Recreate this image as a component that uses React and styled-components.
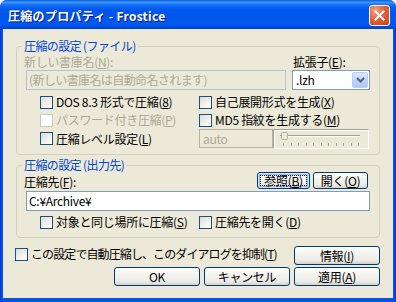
import React from "react";
import styled, { createGlobalStyle } from "styled-components";

const Global = createGlobalStyle`
  html, body { margin: 0; padding: 0; width: 396px; height: 302px; overflow: hidden; background: #fff; }
  body { font-family: "Noto Sans CJK JP", "Liberation Sans", sans-serif; font-size: 12px; line-height: 14px; color: #000; letter-spacing: -0.3px; }
  * { box-sizing: border-box; }
`;

const Window = styled.div`
  width: 396px; height: 302px; display: flex; flex-direction: column;
  background: linear-gradient(to right, #0831D9 0, #0A4FE6 2px, #0855DD 3px, #0855DD 393px, #0A4FE6 394px, #0831D9 396px);
  border-radius: 7px 7px 0 0; overflow: hidden;
`;

const TitleBar = styled.div`
  height: 29px; flex: none; display: flex; align-items: center; justify-content: space-between;
  padding: 2px 6px 0 8px;
  background: linear-gradient(to bottom, #0A5FD8 0%, #3D95FF 8%, #1671F4 16%, #0058EE 32%, #0055EB 60%, #005BF3 82%, #0050E0 92%, #003DD7 100%);
`;

const TitleText = styled.span`
  color: #fff; font-weight: bold; font-size: 12px; letter-spacing: 0.3px;
  text-shadow: 1px 1px 0 #0A1883;
`;

const CloseBtn = styled.div`
  width: 21px; height: 21px; border: 1px solid #fff; border-radius: 3px;
  background: radial-gradient(circle at 30% 25%, #F3A58A 0%, #E0623A 45%, #C8421C 100%);
  display: flex; align-items: center; justify-content: center; margin-top: -1px;
`;

const Client = styled.div`
  flex: 1; margin: 0 3px 4px 3px; background: #ECE9D8;
  padding: 10px 13px 0 13px; display: flex; flex-direction: column;
`;

const Group = styled.fieldset`
  margin: ${(p) => p.$mt || 0}px 0 0 0; padding: 0 9px 6px 7px;
  border: 1px solid #D0D0BF; border-radius: 4px; min-width: 0;
`;

const Legend = styled.legend`
  padding: 0 2px; margin-left: -2px; color: #0046D5; line-height: 14px; height: 14px;
  letter-spacing: -0.6px;
`;

const LabelRow = styled.div`
  display: flex; height: 14px; margin-top: 2px; white-space: nowrap;
`;

const Label = styled.span`
  width: ${(p) => (p.$w ? p.$w + "px" : "auto")};
  padding-left: ${(p) => p.$pl || 0}px;
  color: ${(p) => (p.$disabled ? "#ACA899" : "#000")};
  flex: ${(p) => (p.$grow ? 1 : "none")};
  align-self: ${(p) => p.$align || "auto"};
  white-space: nowrap;
`;

const InputRow = styled.div`
  display: flex; margin-top: 1px;
`;

const TextBox = styled.div`
  height: 20px; width: ${(p) => p.$w}px; margin-left: ${(p) => p.$ml || 0}px;
  border: 1px solid ${(p) => (p.$disabled ? "#B7C2CF" : "#7F9DB9")};
  background: ${(p) => (p.$disabled ? "#ECE9D8" : "#fff")};
  color: ${(p) => (p.$disabled ? "#ACA899" : "#000")};
  letter-spacing: ${(p) => (p.$tight ? "-0.6px" : "-0.3px")};
  padding: 2px 0 0 2px; white-space: nowrap; overflow: hidden; flex: none;
`;

const Combo = styled.div`
  height: 20px; width: ${(p) => p.$w}px; margin-left: ${(p) => p.$ml || 0}px;
  border: 1px solid #7F9DB9; background: #fff; display: flex; align-items: center;
  padding: 1px; flex: none;
`;

const ComboText = styled.span`
  flex: 1; padding-left: 2px;
`;

const DropBtn = styled.div`
  width: 16px; height: 16px; border: 1px solid #B9CEF7; border-radius: 2px;
  background: linear-gradient(to bottom, #DCE7FD 0%, #C3D4FB 50%, #B3C7F5 100%);
  display: flex; align-items: center; justify-content: center;
`;

const CheckGrid = styled.div`
  display: grid; grid-template-columns: 175px 1fr;
  grid-template-rows: ${(p) => p.$rows};
  margin-top: ${(p) => p.$mt}px;
`;

const Cell = styled.div`
  display: flex; align-items: center; padding-left: ${(p) => p.$pl || 0}px; min-width: 0;
`;

const CheckItem = styled.label`
  display: flex; align-items: center; gap: 3px; white-space: nowrap;
  color: ${(p) => (p.$disabled ? "#ACA899" : "#000")};
  margin: ${(p) => p.$m || 0};
  letter-spacing: ${(p) => p.$ls || "-0.3px"};
  height: 14px;
`;

const Box = styled.span`
  display: inline-block; width: 13px; height: 13px; flex: none;
  border: 1px solid ${(p) => (p.$disabled ? "#CAC8BB" : "#1C5180")};
  background: ${(p) =>
    p.$disabled ? "#fff" : "linear-gradient(135deg, #DCDCD7 0%, #F2F2EE 60%, #FFFFFF 100%)"};
`;

const AutoBox = styled.div`
  width: 74px; height: 19px; border: 1px solid #B5B3A6; color: #ACA899;
  padding: 2px 0 0 3px; background: #ECE9D8; flex: none;
`;

const SliderFrame = styled.div`
  width: 96px; height: 20px; flex: none;
  border-top: 1px solid #A4A193; border-left: 1px solid #A4A193;
  border-right: 1px solid #fff; border-bottom: 1px solid #fff;
  box-shadow: inset 1px 1px 0 #fff;
`;

const TopRow = styled.div`
  display: flex; height: 17px; align-items: stretch;
`;

const Btn = styled.div`
  position: relative;
  width: ${(p) => p.$w}px; height: ${(p) => p.$h}px; flex: none;
  margin-left: ${(p) => p.$ml || 0}px;
  border: 1px solid #003C74; border-radius: 3px;
  background: linear-gradient(to bottom, #FFFFFF 0%, #F4F3EE 40%, #ECEBE6 80%, #D6D0C5 100%);
  display: flex; align-items: center; justify-content: center; white-space: nowrap;
  box-shadow: ${(p) => (p.$focus ? "inset 0 0 0 1px #CEE7FF, inset 0 0 0 2px #98B8EA" : "none")};
  &::after {
    content: "";
    display: ${(p) => (p.$focus ? "block" : "none")};
    position: absolute; inset: 2px; border: 1px dotted #000;
  }
`;

const PathRow = styled.div`
  display: flex; margin-top: 2px;
`;

const BottomRow = styled.div`
  display: flex; justify-content: ${(p) => p.$justify}; align-items: flex-start;
  margin-top: ${(p) => p.$mt}px; gap: ${(p) => p.$gap || 0}px;
`;

const U = styled.span`
  text-decoration: underline; text-underline-offset: 1px;
`;

function Check({ children, disabled, m, ls }) {
  return (
    <CheckItem $disabled={disabled} $m={m} $ls={ls}>
      <Box $disabled={disabled} />
      <span>{children}</span>
    </CheckItem>
  );
}

function Slider() {
  const ticks = Array.from({ length: 11 }, (_, i) => 9 + i * 7.5);
  return (
    <SliderFrame>
      <svg width="94" height="18" viewBox="0 0 94 18">
        <rect x="6" y="5" width="80" height="1" fill="#A4A193" />
        <rect x="6" y="6" width="80" height="1" fill="#fff" />
        <rect x="7.5" y="2.5" width="6" height="7" rx="1" fill="#ECE9D8" stroke="#B3B1A4" />
        {ticks.map((x, i) => (
          <rect key={i} x={Math.round(x)} y="13" width="1" height="3" fill="#A4A193" />
        ))}
      </svg>
    </SliderFrame>
  );
}

export default function App() {
  return (
    <>
      <Global />
      <Window>
        <TitleBar>
          <TitleText>圧縮のプロパティ - Frostice</TitleText>
          <CloseBtn>
            <svg width="11" height="11" viewBox="0 0 11 11">
              <path d="M1.5 1.5 L9.5 9.5 M9.5 1.5 L1.5 9.5" stroke="#fff" strokeWidth="2" strokeLinecap="square" />
            </svg>
          </CloseBtn>
        </TitleBar>
        <Client>
          <Group>
            <Legend>圧縮の設定 (ファイル)</Legend>
            <LabelRow>
              <Label $w={268} $disabled>新しい書庫名(<U>N</U>):</Label>
              <Label $pl={1}>拡張子(<U>E</U>):</Label>
            </LabelRow>
            <InputRow>
              <TextBox $w={260} $ml={2} $disabled $tight>(新しい書庫名は自動命名されます)</TextBox>
              <Combo $w={78} $ml={6}>
                <ComboText>.lzh</ComboText>
                <DropBtn>
                  <svg width="9" height="6" viewBox="0 0 9 6">
                    <path d="M1 1 L4.5 4.5 L8 1" stroke="#4D6185" strokeWidth="2" fill="none" />
                  </svg>
                </DropBtn>
              </Combo>
            </InputRow>
            <CheckGrid $rows="18px 18px 19px" $mt={3}>
              <Cell $pl={16}><Check>DOS 8.3 形式で圧縮(<U>8</U>)</Check></Cell>
              <Cell><Check>自己展開形式を生成(<U>X</U>)</Check></Cell>
              <Cell $pl={16}><Check disabled>パスワード付き圧縮(<U>P</U>)</Check></Cell>
              <Cell><Check>MD5 指紋を生成する(<U>M</U>)</Check></Cell>
              <Cell $pl={16}><Check>圧縮レベル設定(<U>L</U>)</Check></Cell>
              <Cell>
                <AutoBox>auto</AutoBox>
                <Slider />
              </Cell>
            </CheckGrid>
          </Group>
          <Group $mt={3}>
            <Legend>圧縮の設定 (出力先)</Legend>
            <TopRow>
              <Label $grow $align="flex-end">圧縮先(<U>F</U>):</Label>
              <Btn $w={53} $h={17} $focus>参照(<U>B</U>)</Btn>
              <Btn $w={55} $h={17} $ml={3}>開く(<U>O</U>)</Btn>
              <Label $w={2} />
            </TopRow>
            <PathRow>
              <TextBox $w={344} $ml={2}>C:¥Archive¥</TextBox>
            </PathRow>
            <CheckGrid $rows="18px" $mt={2}>
              <Cell $pl={16}><Check>対象と同じ場所に圧縮(<U>S</U>)</Check></Cell>
              <Cell><Check>圧縮先を開く(<U>D</U>)</Check></Cell>
            </CheckGrid>
          </Group>
          <BottomRow $justify="space-between" $mt={8}>
            <Check m="1px 0 0 -1px" ls="-0.9px">この設定で自動圧縮し、このダイアログを抑制(<U>T</U>)</Check>
            <Btn $w={86} $h={19}>情報(<U>I</U>)</Btn>
          </BottomRow>
          <BottomRow $justify="flex-end" $mt={2} $gap={4}>
            <Btn $w={86} $h={19}>OK</Btn>
            <Btn $w={86} $h={19}>キャンセル</Btn>
            <Btn $w={86} $h={19}>適用(<U>A</U>)</Btn>
          </BottomRow>
        </Client>
      </Window>
    </>
  );
}
